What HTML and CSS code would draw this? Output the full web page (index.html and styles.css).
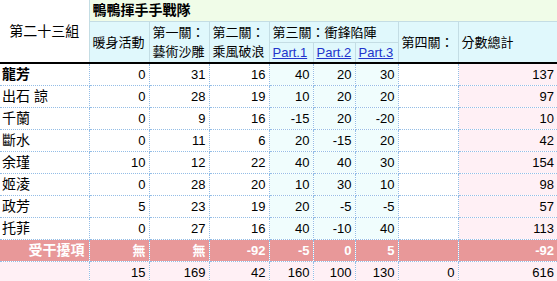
FILE: index.html
```html
<!DOCTYPE html>
<html>
<head>
<meta charset="utf-8">
<link rel="stylesheet" href="styles.css">
</head>
<body>
<table class="score">
  <colgroup>
    <col class="c-name"><col class="c-60"><col class="c-60"><col class="c-60">
    <col class="c-p1"><col class="c-p2"><col class="c-p3"><col class="c-60"><col class="c-total">
  </colgroup>
  <thead>
    <tr class="h1">
      <th rowspan="3" class="group">第二十三組</th>
      <th colspan="8" class="team">鴨鴨揮手手戰隊</th>
    </tr>
    <tr class="h2">
      <th rowspan="2" class="hc">暖身活動</th>
      <th rowspan="2" class="hc two">第一關：<br>藝術沙雕</th>
      <th rowspan="2" class="hc two">第二關：<br>乘風破浪</th>
      <th colspan="3" class="hc">第三關：衝鋒陷陣</th>
      <th rowspan="2" class="hc">第四關：</th>
      <th rowspan="2" class="hc">分數總計</th>
    </tr>
    <tr class="h3">
      <th class="hc part"><a href="#">Part.1</a></th>
      <th class="hc part"><a href="#">Part.2</a></th>
      <th class="hc part"><a href="#">Part.3</a></th>
    </tr>
  </thead>
  <tbody>
    <tr><td class="nm bold">龍芳</td><td>0</td><td>31</td><td>16</td><td class="p">40</td><td class="p">20</td><td class="p">30</td><td></td><td class="t">137</td></tr>
    <tr><td class="nm">出石 諒</td><td>0</td><td>28</td><td>19</td><td class="p">10</td><td class="p">20</td><td class="p">20</td><td></td><td class="t">97</td></tr>
    <tr><td class="nm">千蘭</td><td>0</td><td>9</td><td>16</td><td class="p">-15</td><td class="p">20</td><td class="p">-20</td><td></td><td class="t">10</td></tr>
    <tr><td class="nm">斷水</td><td>0</td><td>11</td><td>6</td><td class="p">20</td><td class="p">-15</td><td class="p">20</td><td></td><td class="t">42</td></tr>
    <tr><td class="nm">余瑾</td><td>10</td><td>12</td><td>22</td><td class="p">40</td><td class="p">40</td><td class="p">30</td><td></td><td class="t">154</td></tr>
    <tr><td class="nm">姬淩</td><td>0</td><td>28</td><td>20</td><td class="p">10</td><td class="p">30</td><td class="p">10</td><td></td><td class="t">98</td></tr>
    <tr><td class="nm">政芳</td><td>5</td><td>23</td><td>19</td><td class="p">20</td><td class="p">-5</td><td class="p">-5</td><td></td><td class="t">57</td></tr>
    <tr><td class="nm">托菲</td><td>0</td><td>27</td><td>16</td><td class="p">40</td><td class="p">-10</td><td class="p">40</td><td></td><td class="t">113</td></tr>
    <tr class="penalty"><td>受干擾項</td><td>無</td><td>無</td><td>-92</td><td>-5</td><td>0</td><td>5</td><td></td><td>-92</td></tr>
    <tr class="sum"><td></td><td>15</td><td>169</td><td>42</td><td>160</td><td>100</td><td>130</td><td>0</td><td>616</td></tr>
  </tbody>
</table>
</body>
</html>
```
FILE: styles.css
```css
html, body {
  margin: 0;
  padding: 0;
  background: #ffffff;
}
.score {
  border-collapse: collapse;
  table-layout: fixed;
  width: 557px;
  font-family: "Liberation Sans", "Noto Sans CJK TC", sans-serif;
  font-size: 13px;
  color: #000;
}
.c-name { width: 89px; }
.c-60 { width: 60px; }
.c-p1 { width: 44px; }
.c-p2 { width: 42px; }
.c-p3 { width: 43px; }
.c-total { width: 99px; }

.score th, .score td {
  padding: 0 3px;
  overflow: hidden;
  white-space: nowrap;
}
.score thead th {
  border: 1px solid #c4dde4;
  font-weight: normal;
  text-align: left;
  line-height: 19px;
}
.score thead tr:last-child th,
.score thead th[rowspan] {
  border-bottom: 2px solid #000;
}
.score .group {
  background: #fff;
  text-align: center;
  border-left: none;
  border-top: none;
  font-size: 14px;
}
.score .team {
  background: #f0fce8;
  font-weight: bold;
  height: 21px;
  border-top: none;
  border-right: none;
  font-size: 14px;
}
.score .hc {
  background: #e0f8fc;
}
.score .hc:last-child { border-right: none; }
.h2 .hc { height: 20px; }
.h3 .hc { height: 18px; }
.part a {
  color: #2233cc;
  text-decoration: underline;
}
.score tbody td {
  border: 1px dotted #94bde6;
  text-align: right;
  height: 21px;
  line-height: 19px;
  padding: 0 3px 0 2px;
}
.score tbody td:first-child { border-left: none; }
.score tbody td:last-child { border-right: none; }
.score tbody td.nm {
  text-align: left;
  font-size: 14px;
}
.score tbody td.bold { font-weight: bold; }
.score tbody td.p { background: #f0fdfd; }
.score tbody td.t { background: #fff0f5; }
.score .penalty td {
  background: #e89899;
  color: #fff;
  font-weight: bold;
}
.score .penalty td:first-child { font-size: 14px; padding-right: 4px; }
.score .sum td { background: #fff0f5; }
```
